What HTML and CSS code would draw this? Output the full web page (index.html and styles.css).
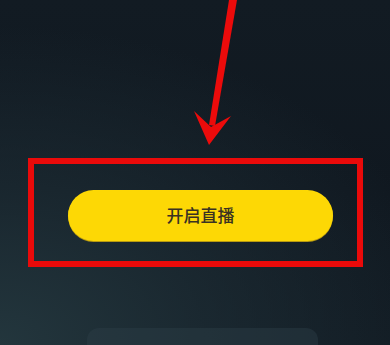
FILE: index.html
```html
<!DOCTYPE html>
<html lang="zh">
<head>
  <meta charset="UTF-8" />
  <meta name="viewport" content="width=device-width, initial-scale=1" />
  <title>开启直播</title>
  <link rel="stylesheet" href="styles.css">
</head>
<body>
  <div class="screen">
    <!-- arrow annotation -->
    <svg class="arrow" width="390" height="160" viewBox="0 0 390 160">
      <polygon points="229,0 237,0 215,126 209,125" fill="#ec0b0b" />
      <polygon points="194,111 211,127 231,116 209,145" fill="#ec0b0b" />
    </svg>

    <div class="highlight">
      <button class="live-btn">开启直播</button>
    </div>

    <div class="bottom-card"></div>
  </div>
</body>
</html>
```

FILE: styles.css
```css
* {
  box-sizing: border-box;
}
html, body {
  margin: 0;
  padding: 0;
}

.screen {
  position: relative;
  width: 390px;
  height: 345px;
  overflow: hidden;
  padding-top: 158px;
  background:
    radial-gradient(ellipse 460px 320px at 0% 100%, #23363d 0%, rgba(30, 46, 54, 0.7) 45%, rgba(17, 26, 34, 0) 100%),
    linear-gradient(180deg, #121b23 0%, #101820 55%, #111a22 100%);
}

.arrow {
  position: absolute;
  top: 0;
  left: 0;
}

/* red frame around the button */
.highlight {
  margin-left: 28px;
  width: 335px;
  height: 109px;
  border: 6px solid #ea0a0a;
  padding: 26px 0 0 34px;
}

.live-btn {
  display: block;
  width: 265px;
  height: 51px;
  border: none;
  border-radius: 26px;
  background: #fdd805;
  box-shadow: 0 1px 0 #b89a10;
  color: #3a3222;
  font-family: "Noto Sans CJK SC", sans-serif;
  font-size: 17px;
  font-weight: 500;
  padding: 0 0 2px 0;
  cursor: pointer;
}

.bottom-card {
  margin: 61px 0 0 87px;
  width: 231px;
  height: 40px;
  border-radius: 12px;
  background: rgba(44, 62, 70, 0.45);
}
```
